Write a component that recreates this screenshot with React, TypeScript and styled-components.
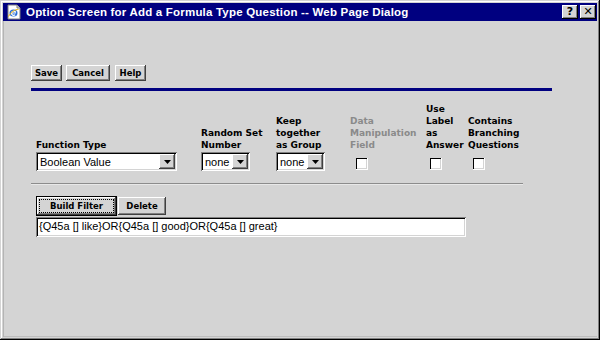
import React from 'react';
import styled, {createGlobalStyle} from "styled-components";

const Global = createGlobalStyle`
    html, body {
        margin: 0;
        padding: 0;
        background: #d4d4d4;
    }
    * {
        box-sizing: border-box;
    }
`;

const face = "#d4d4d4";

const IeIcon = () => (
    <svg width="16" height="16" viewBox="0 0 16 16">
        <path d="M2 1h9l3 3v11H2z" fill="#fff" stroke="#808080" strokeWidth="1"/>
        <path d="M11 1v3h3" fill="#d4d4d4" stroke="#808080" strokeWidth="1"/>
        <ellipse cx="7.5" cy="9" rx="4" ry="3.6" fill="#2b6fd6"/>
        <path d="M5.2 9h4.6M9.8 8.3a2.3 2 0 1 0 -0.6 2.4" fill="none" stroke="#fff" strokeWidth="1.2"/>
        <path d="M2.5 12.5c2-4 7-7.5 10-7" fill="none" stroke="#f0b400" strokeWidth="1"/>
    </svg>
);

const ArrowDown = () => (
    <svg width="7" height="4" viewBox="0 0 7 4">
        <path d="M0 0h7L3.5 4z" fill="#000"/>
    </svg>
);

export default function App() {
    return (
        <>
            <Global/>
            <Window>
                <TitleBar>
                    <IeIcon/>
                    <Title>Option Screen for Add a Formula Type Question -- Web Page Dialog</Title>
                    <TitleButton>?</TitleButton>
                    <TitleButton>&#x2715;</TitleButton>
                </TitleBar>
                <Client>
                    <ButtonRow>
                        <Button w={31}>Save</Button>
                        <Button w={44}>Cancel</Button>
                        <Button w={31} gap={5}>Help</Button>
                    </ButtonRow>
                    <NavyRule/>
                    <FormGrid>
                        <Label>Function Type</Label>
                        <Label maxW={70}>Random Set Number</Label>
                        <Label maxW={54}>Keep together as Group</Label>
                        <Label maxW={70} disabled>Data Manipulation Field</Label>
                        <Label maxW={40}>Use Label as Answer</Label>
                        <Label maxW={60}>Contains Branching Questions</Label>

                        <Select w={141}>
                            <span>Boolean Value</span>
                            <DropButton><ArrowDown/></DropButton>
                        </Select>
                        <Select w={49}>
                            <span>none</span>
                            <DropButton><ArrowDown/></DropButton>
                        </Select>
                        <Select w={49}>
                            <span>none</span>
                            <DropButton><ArrowDown/></DropButton>
                        </Select>
                        <Check offset={6}/>
                        <Check offset={4}/>
                        <Check offset={5}/>
                    </FormGrid>
                    <GreyRule/>
                    <FilterRow>
                        <DefaultButton><span>Build Filter</span></DefaultButton>
                        <Button w={48} h={18}>Delete</Button>
                    </FilterRow>
                    <FilterInput>{"{Q45a [] like}OR{Q45a [] good}OR{Q45a [] great}"}</FilterInput>
                </Client>
            </Window>
        </>
    );
}

const Window = styled.div`
    width: 600px;
    height: 340px;
    padding: 3px;
    display: flex;
    flex-direction: column;
    background: ${face};
    box-shadow: inset -1px -1px #000, inset 1px 1px ${face},
        inset -2px -2px #808080, inset 2px 2px #fff;
`;

const TitleBar = styled.div`
    height: 18px;
    background: #000080;
    display: flex;
    align-items: center;
    padding: 0 1px 0 3px;
    gap: 4px;
`;

const Title = styled.div`
    flex: 1;
    color: #fff;
    font-family: "Liberation Sans", Arial, sans-serif;
    font-weight: bold;
    font-size: 11.5px;
    letter-spacing: 0.2px;
    white-space: nowrap;
`;

const TitleButton = styled.div`
    width: 16px;
    height: 14px;
    margin-left: -2px;
    background: ${face};
    box-shadow: inset -1px -1px #000, inset 1px 1px #fff,
        inset -2px -2px #808080;
    font-family: "DejaVu Sans", sans-serif;
    font-weight: bold;
    font-size: 11px;
    line-height: 14px;
    text-align: center;
    color: #000;
`;

const Client = styled.div`
    flex: 1;
    padding: 44px 0 0 28px;
    box-shadow: inset 1px 0 #b4b4b4, inset 0 -1px #bcbcbc;
`;

const ButtonRow = styled.div`
    display: flex;
`;

const Button = styled.div<{ w: number; h?: number; gap?: number }>`
    width: ${p => p.w}px;
    height: ${p => p.h ?? 16}px;
    margin-left: ${p => p.gap ?? 4}px;
    &:first-child {
        margin-left: 0;
    }
    display: flex;
    align-items: center;
    justify-content: center;
    background: ${face};
    box-shadow: inset -1px -1px #404040, inset 1px 1px #fff,
        inset -2px -2px #808080;
    font-family: "DejaVu Sans", Verdana, sans-serif;
    font-weight: bold;
    font-size: 8.5px;
    color: #000;
`;

const NavyRule = styled.div`
    width: 521px;
    height: 3px;
    margin-top: 7px;
    background: #000080;
`;

const FormGrid = styled.div`
    display: grid;
    grid-template-columns: 165px 75px 74px 76px 42px 60px;
    align-items: end;
    margin: 12px 0 0 5px;
`;

const Label = styled.div<{ disabled?: boolean; maxW?: number }>`
    max-width: ${p => p.maxW ? `${p.maxW}px` : "none"};
    font-family: "DejaVu Sans", Verdana, sans-serif;
    font-weight: bold;
    font-size: 9px;
    line-height: 12px;
    color: ${p => p.disabled ? "#8a8a8a" : "#000"};
    padding-bottom: 1px;
`;

const Select = styled.div<{ w: number }>`
    width: ${p => p.w}px;
    height: 19px;
    align-self: start;
    display: flex;
    align-items: center;
    background: #fff;
    padding: 2px 2px 2px 4px;
    box-shadow: inset 1px 1px #808080, inset -1px -1px #fff,
        inset 2px 2px #000, inset -2px -2px ${face};
    font-family: "Liberation Sans", Arial, sans-serif;
    font-size: 11px;
    color: #000;
    span {
        flex: 1;
        white-space: nowrap;
    }
`;

const DropButton = styled.div`
    width: 16px;
    height: 15px;
    display: flex;
    align-items: center;
    justify-content: center;
    background: ${face};
    box-shadow: inset -1px -1px #404040, inset 1px 1px #fff,
        inset -2px -2px #808080;
`;

const Check = styled.div<{ offset: number }>`
    width: 12px;
    height: 12px;
    margin: 6px 0 0 ${p => p.offset}px;
    align-self: start;
    background: #fff;
    box-shadow: inset 1px 1px #000, inset -1px -1px ${face};
    border-right: 1px solid #fff;
    border-bottom: 1px solid #fff;
`;

const GreyRule = styled.div`
    width: 492px;
    height: 2px;
    margin-top: 12px;
    border-top: 1px solid #8c8c8c;
    border-bottom: 1px solid #e8e8e8;
`;

const FilterRow = styled.div`
    display: flex;
    align-items: center;
    margin: 11px 0 0 5px;
    & > div:last-child {
        margin-left: 1px;
    }
`;

const DefaultButton = styled.div`
    width: 81px;
    height: 20px;
    padding: 3px;
    background: ${face};
    box-shadow: inset 0 0 0 1px #000, inset -2px -2px #404040,
        inset 2px 2px #fff, inset -3px -3px #808080;
    font-family: "DejaVu Sans", Verdana, sans-serif;
    font-weight: bold;
    font-size: 8.5px;
    color: #000;
    span {
        display: flex;
        height: 100%;
        align-items: center;
        justify-content: center;
        border: 1px dotted #000;
    }
`;

const FilterInput = styled.div`
    width: 430px;
    height: 20px;
    margin: 1px 0 0 5px;
    padding: 3px 0 0 3px;
    background: #fff;
    box-shadow: inset 1px 1px #808080, inset -1px -1px #fff,
        inset 2px 2px #000, inset -2px -2px ${face};
    font-family: "Liberation Sans", Arial, sans-serif;
    font-size: 11px;
    color: #000;
    white-space: nowrap;
`;
